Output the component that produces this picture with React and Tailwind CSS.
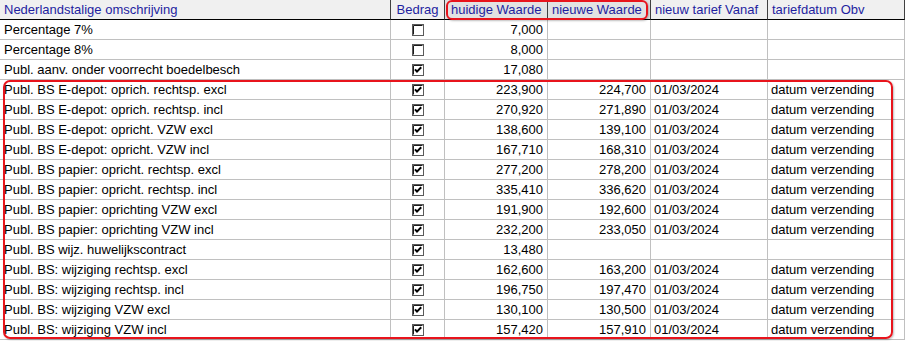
import React from "react";

const rows = [
  ["Percentage 7%", false, "7,000", "", "", ""],
  ["Percentage 8%", false, "8,000", "", "", ""],
  ["Publ. aanv. onder voorrecht boedelbesch", true, "17,080", "", "", ""],
  ["Publ. BS E-depot: oprich. rechtsp. excl", true, "223,900", "224,700", "01/03/2024", "datum verzending"],
  ["Publ. BS E-depot: oprich. rechtsp. incl", true, "270,920", "271,890", "01/03/2024", "datum verzending"],
  ["Publ. BS E-depot: opricht. VZW excl", true, "138,600", "139,100", "01/03/2024", "datum verzending"],
  ["Publ. BS E-depot: opricht. VZW incl", true, "167,710", "168,310", "01/03/2024", "datum verzending"],
  ["Publ. BS papier: opricht. rechtsp. excl", true, "277,200", "278,200", "01/03/2024", "datum verzending"],
  ["Publ. BS papier: opricht. rechtsp. incl", true, "335,410", "336,620", "01/03/2024", "datum verzending"],
  ["Publ. BS papier: oprichting VZW excl", true, "191,900", "192,600", "01/03/2024", "datum verzending"],
  ["Publ. BS papier: oprichting VZW incl", true, "232,200", "233,050", "01/03/2024", "datum verzending"],
  ["Publ. BS wijz. huwelijkscontract", true, "13,480", "", "", ""],
  ["Publ. BS: wijziging rechtsp. excl", true, "162,600", "163,200", "01/03/2024", "datum verzending"],
  ["Publ. BS: wijziging rechtsp. incl", true, "196,750", "197,470", "01/03/2024", "datum verzending"],
  ["Publ. BS: wijziging VZW excl", true, "130,100", "130,500", "01/03/2024", "datum verzending"],
  ["Publ. BS: wijziging VZW incl", true, "157,420", "157,910", "01/03/2024", "datum verzending"],
];

function Check({ checked }) {
  return (
    <svg width="12" height="12" viewBox="0 0 12 12" className="block">
      <rect x="0.5" y="0.5" width="11" height="11" fill="#fff" stroke="#5a5a5a" />
      <path d="M1.5 10.5 V1.5 H10.5" fill="none" stroke="#1a1a1a" />
      {checked && (
        <polyline points="3,5.3 5,7.6 9.2,3.2" fill="none" stroke="#000" strokeWidth="2" />
      )}
    </svg>
  );
}

const cols = "grid-cols-[391px_54px_103px_103px_117px_137px]";

export default function App() {
  return (
    <div className="relative w-[907px] h-[341px] bg-white overflow-hidden text-[13px] leading-none text-black font-['Liberation_Sans',Arial,sans-serif]">
      <div className={`grid ${cols} w-[905px]`}>
        {/* header */}
        <div className="h-[20px] bg-[#f0f0f0] border-r border-b border-r-[#404040] border-b-black flex items-center pl-[4px] text-[#1e1ea0]">Nederlandstalige omschrijving</div>
        <div className="h-[20px] bg-[#f0f0f0] border-r border-b border-r-[#404040] border-b-black flex items-center justify-center text-[#1e1ea0]">Bedrag</div>
        <div className="h-[20px] bg-[#e2e2e2] border-r border-b border-r-[#404040] border-b-black flex items-center pl-[6px] text-[#1e1ea0]">huidige Waarde</div>
        <div className="h-[20px] bg-[#e2e2e2] border-r border-b border-r-[#404040] border-b-black flex items-center pl-[4px] text-[#1e1ea0]">nieuwe Waarde</div>
        <div className="h-[20px] bg-[#f0f0f0] border-r border-b border-r-[#404040] border-b-black flex items-center pl-[4px] text-[#1e1ea0]">nieuw tarief Vanaf</div>
        <div className="h-[20px] bg-[#f0f0f0] border-r border-b border-r-[#404040] border-b-black flex items-center pl-[4px] text-[#1e1ea0]">tariefdatum Obv</div>

        {rows.map((r, i) => (
          <React.Fragment key={i}>
            <div className="h-[20px] border-r border-b border-[#c0c0c0] flex items-center pl-[4px] whitespace-nowrap">{r[0]}</div>
            <div className="h-[20px] border-r border-b border-[#c0c0c0] flex items-center justify-center pl-[1px]"><Check checked={r[1]} /></div>
            <div className="h-[20px] border-r border-b border-[#c0c0c0] flex items-center justify-end pr-[4px]">{r[2]}</div>
            <div className="h-[20px] border-r border-b border-[#c0c0c0] flex items-center justify-end pr-[4px]">{r[3]}</div>
            <div className="h-[20px] border-r border-b border-[#c0c0c0] flex items-center pl-[3px]">{r[4]}</div>
            <div className="h-[20px] border-r border-b border-[#c0c0c0] flex items-center pl-[3px]">{r[5]}</div>
          </React.Fragment>
        ))}
      </div>

      {/* red annotation boxes */}
      <div className="absolute left-[446px] top-[0px] w-[202px] h-[20px] border-2 border-[#e8141c] rounded-[6px] shadow-[1px_1px_2px_rgba(0,0,0,0.25)]" />
      <div className="absolute left-[3px] top-[80px] w-[890px] h-[259px] border-2 border-[#e8141c] rounded-[7px] shadow-[1px_1px_2px_rgba(0,0,0,0.25)]" />
    </div>
  );
}
